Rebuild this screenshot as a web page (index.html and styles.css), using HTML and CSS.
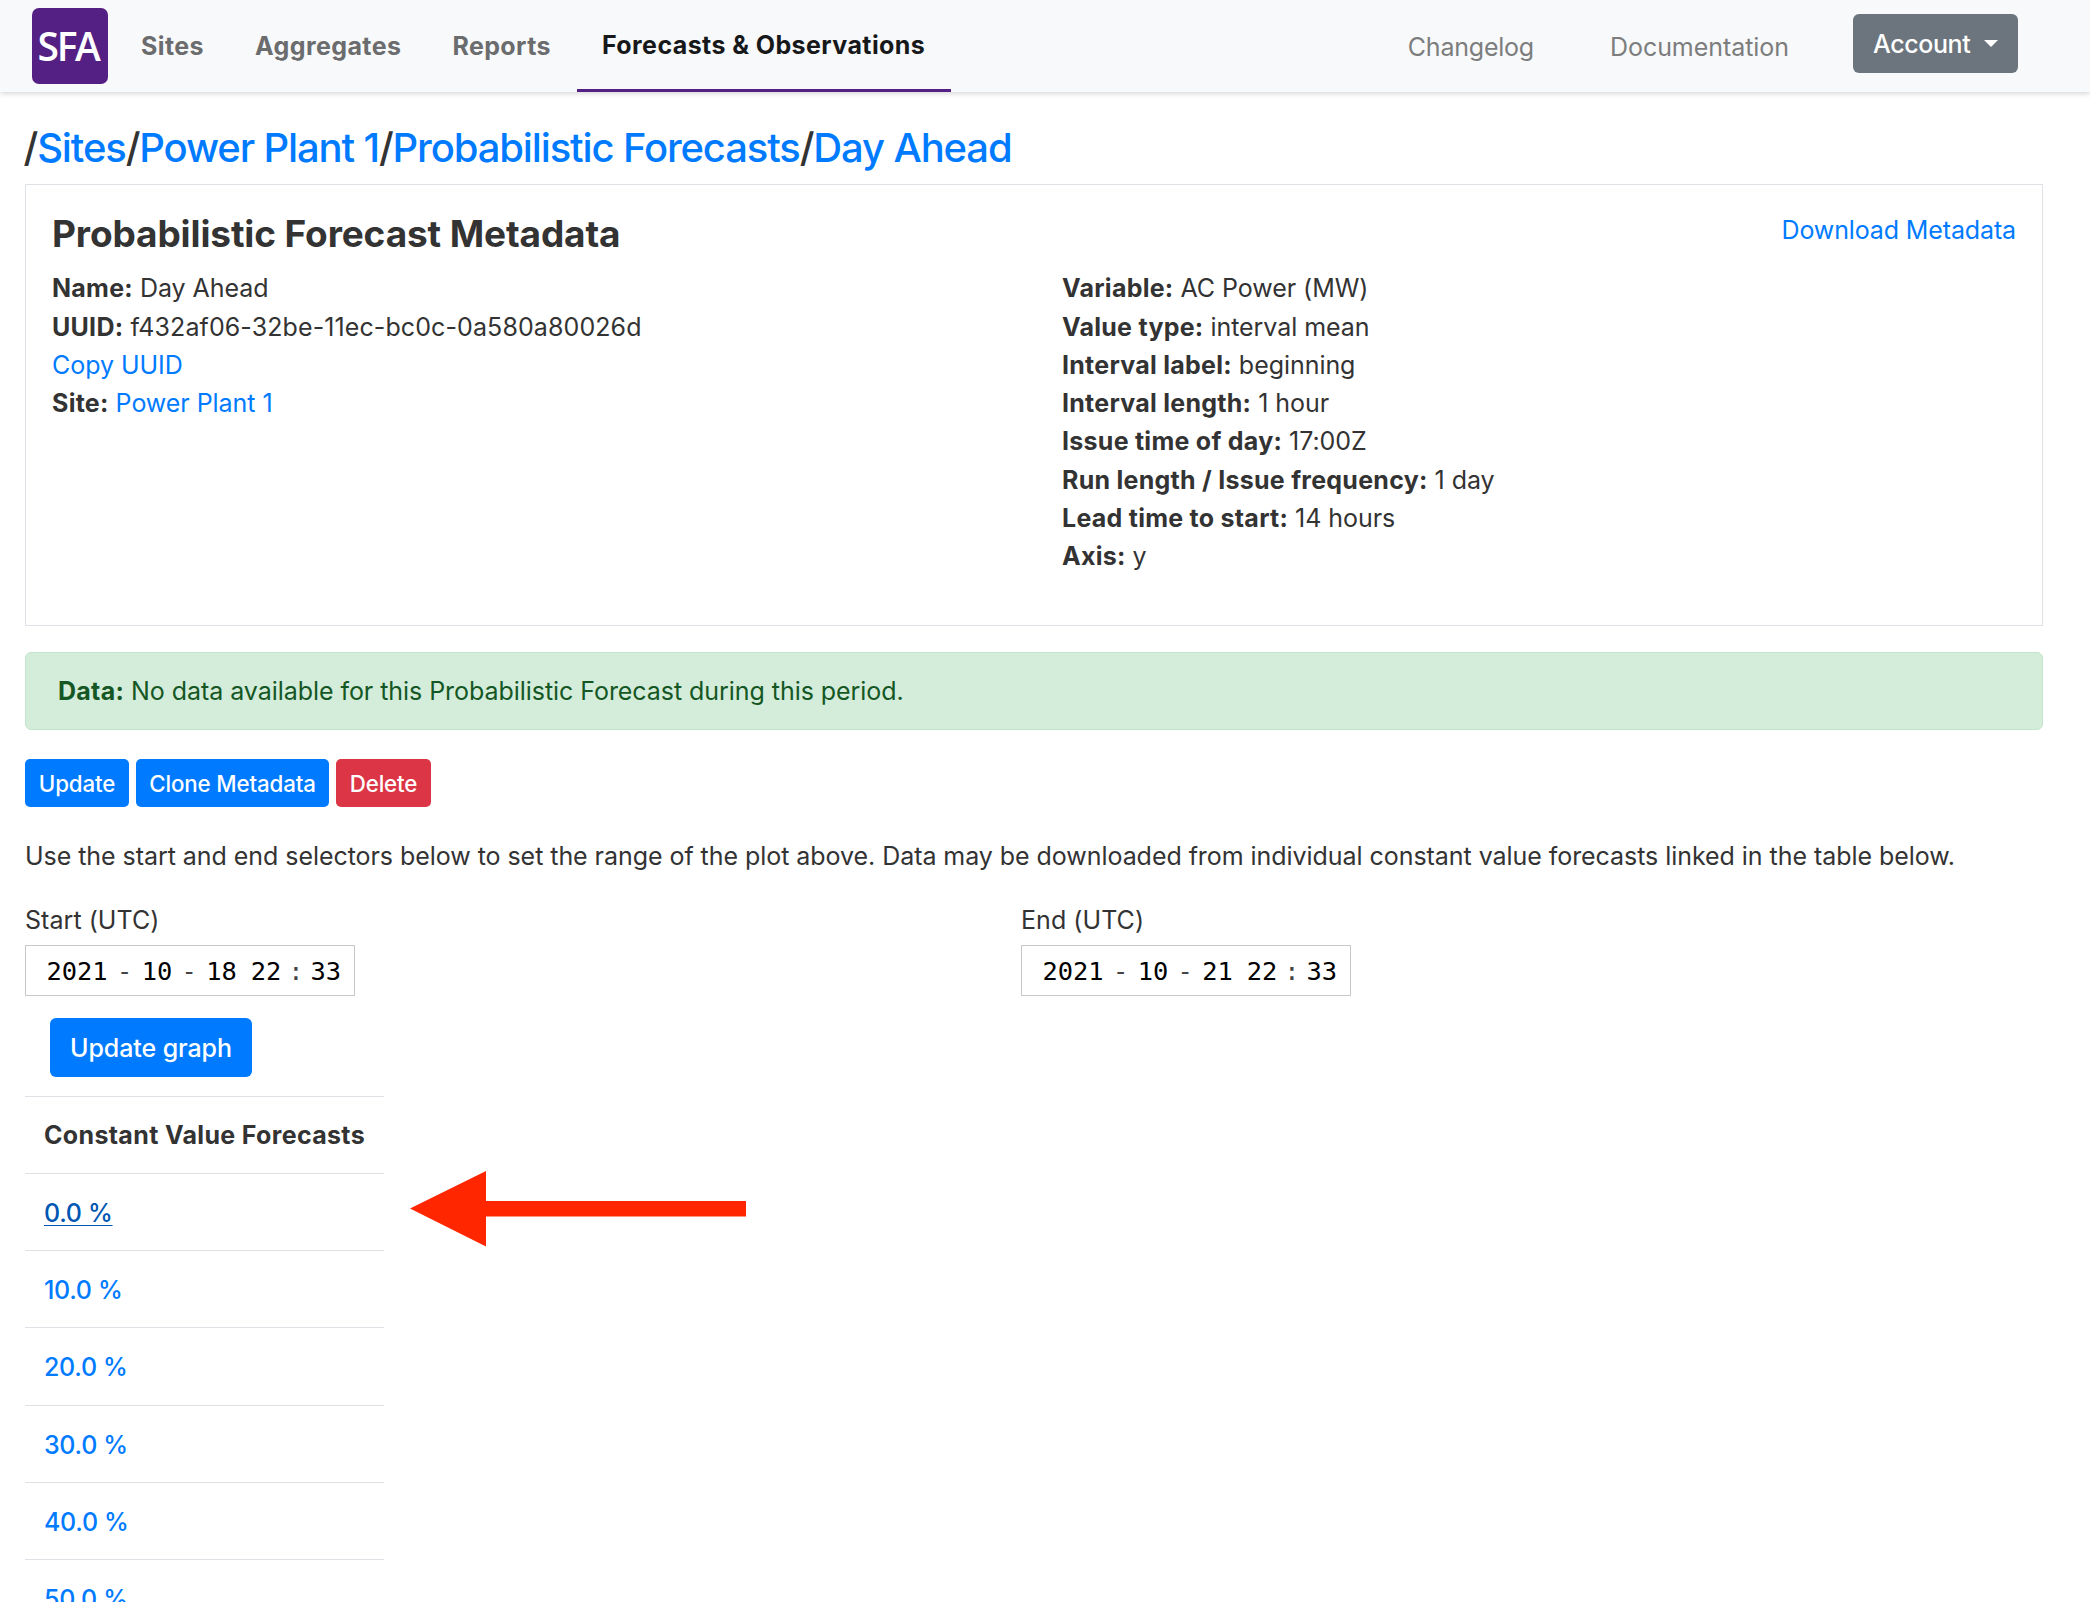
FILE: index.html
```html
<!DOCTYPE html>
<html lang="en">
<head>
<meta charset="utf-8">
<title>Day Ahead - Probabilistic Forecast</title>
<link rel="stylesheet" href="styles.css">
</head>
<body>
<nav class="navbar">
  <a class="brand" href="#">SFA</a>
  <div class="nav-main">
    <a class="nav-link sites" href="#">Sites</a>
    <a class="nav-link aggregates" href="#">Aggregates</a>
    <a class="nav-link reports" href="#">Reports</a>
    <a class="nav-link active" href="#">Forecasts &amp; Observations</a>
  </div>
  <div class="nav-side">
    <a class="side-link changelog" href="#">Changelog</a>
    <a class="side-link docs" href="#">Documentation</a>
    <a class="account" href="#">Account<span class="caret"></span></a>
  </div>
</nav>
<main class="content">
  <h1 class="breadcrumb">/<a href="#">Sites</a>/<a href="#">Power Plant 1</a>/<a href="#">Probabilistic Forecasts</a>/<a href="#">Day Ahead</a></h1>
  <section class="metadata">
    <div class="metadata-head">
      <h2 class="metadata-title">Probabilistic Forecast Metadata</h2>
      <a class="download" href="#">Download Metadata</a>
    </div>
    <div class="metadata-cols">
      <div class="col">
        <div class="item"><b>Name:</b> Day Ahead</div>
        <div class="item uuid"><b>UUID:</b> f432af06-32be-11ec-bc0c-0a580a80026d</div>
        <div class="item"><a href="#">Copy UUID</a></div>
        <div class="item"><b>Site:</b> <a href="#">Power Plant 1</a></div>
      </div>
      <div class="col">
        <div class="item"><b>Variable:</b> AC Power (MW)</div>
        <div class="item"><b>Value type:</b> interval mean</div>
        <div class="item"><b>Interval label:</b> beginning</div>
        <div class="item"><b>Interval length:</b> 1 hour</div>
        <div class="item"><b>Issue time of day:</b> 17:00Z</div>
        <div class="item"><b>Run length / Issue frequency:</b> 1 day</div>
        <div class="item"><b>Lead time to start:</b> 14 hours</div>
        <div class="item"><b>Axis:</b> y</div>
      </div>
    </div>
  </section>
  <div class="alert"><b>Data:</b> No data available for this Probabilistic Forecast during this period.</div>
  <div class="actions">
    <a class="btn-sm update" href="#">Update</a>
    <a class="btn-sm clone" href="#">Clone Metadata</a>
    <a class="btn-sm delete" href="#">Delete</a>
  </div>
  <p class="help">Use the start and end selectors below to set the range of the plot above. Data may be downloaded from individual constant value forecasts linked in the table below.</p>
  <div class="range">
    <div class="field">
      <div class="label">Start (UTC)</div>
      <div class="datetime"><span>2021</span><i class="dash">-</i><span>10</span><i class="dash">-</i><span>18</span><span class="hour">22</span><i class="colon">:</i><span>33</span></div>
    </div>
    <div class="field">
      <div class="label">End (UTC)</div>
      <div class="datetime"><span>2021</span><i class="dash">-</i><span>10</span><i class="dash">-</i><span>21</span><span class="hour">22</span><i class="colon">:</i><span>33</span></div>
    </div>
  </div>
  <a class="btn" href="#">Update graph</a>
  <div class="forecasts">
    <div class="row head">Constant Value Forecasts</div>
    <div class="row"><a class="hovered" href="#">0.0 %</a></div>
    <div class="row"><a href="#">10.0 %</a></div>
    <div class="row"><a href="#">20.0 %</a></div>
    <div class="row"><a href="#">30.0 %</a></div>
    <div class="row"><a href="#">40.0 %</a></div>
    <div class="row"><a href="#">50.0 %</a></div>
  </div>
  <svg class="arrow" width="338" height="78" viewBox="0 0 338 78"><path d="M1 38.500 77 1V31H337V46.500H77V76.500Z" fill="#ff2600"/></svg>
</main>
</body>
</html>
```
FILE: styles.css
```css
* { box-sizing: border-box; }

html { height: 100%; overflow: hidden; }

body {
  height: 100%;
  margin: 0;
  overflow: hidden;
  background: #fff;
  color: #333;
  font: 400 25px/38.250px Inter, sans-serif;
  letter-spacing: -.05px;
}

a { color: #007bff; text-decoration: none; }
b { font-weight: 700; letter-spacing: .26px; }

.navbar {
  display: flex;
  align-items: flex-start;
  height: 92px;
  padding-left: 32px;
  padding-right: 72px;
  background: #f8f9fb;
  box-shadow: 0 1px 6px rgba(0, 0, 0, .2);
}

.brand {
  width: 76px;
  height: 76px;
  margin-top: 8px;
  padding-right: 4px;
  border-radius: 7px;
  background: #552084;
  color: #fff;
  font: 600 39px/76px "Open Sans", sans-serif;
  letter-spacing: -2.400px;
  text-align: center;
}

.nav-main { display: flex; margin-left: 7.500px; }

.nav-link {
  height: 92px;
  padding: 27px 25.500px 0;
  color: #6b6c6d;
  font-weight: 700;
  letter-spacing: .41px;
}

.nav-link.active {
  padding-top: 26px;
  border-bottom: 3px solid #552084;
  color: #17181a;
}

.nav-side { display: flex; margin-left: auto; }
.side-link { padding-top: 28px; color: #7c7d7d; }
.changelog { margin-right: 76px; letter-spacing: -.22px; }
.docs { margin-right: 64px; }

.account {
  display: flex;
  align-items: center;
  justify-content: space-between;
  width: 165px;
  height: 59px;
  margin-top: 14px;
  padding: 1px 20px 0;
  border-radius: 6px;
  background: #6c757d;
  color: #fff;
  font-weight: 450;
  letter-spacing: -.4px;
}

.caret {
  margin-top: -2px;
  border: 7px solid transparent;
  border-top-color: #fff;
  border-bottom: 0;
}

.content { position: relative; padding: 29px 47px 0 25px; }

.breadcrumb {
  margin: 0;
  font-size: 40px;
  font-weight: 500;
  line-height: 54px;
  letter-spacing: -1.140px;
  text-indent: -1.500px;
}

.metadata {
  height: 442px;
  margin-top: 9px;
  padding: 24px 26px;
  border: 1px solid #dee2e6;
}

.metadata-head { display: flex; justify-content: space-between; height: 54px; }
.metadata-title { margin: 0; font-size: 37px; font-weight: 700; line-height: 50px; letter-spacing: -.12px; }
.download { margin-top: 2px; letter-spacing: -.13px; }
.metadata-cols { display: grid; grid-template-columns: 1010px 1fr; padding-top: 6.250px; }
.uuid { letter-spacing: .1px; }

.alert {
  height: 78px;
  margin-top: 26px;
  padding: 19px 32px;
  border: 1px solid #c3e6cb;
  border-radius: 6px;
  background: #d4edda;
  color: #155724;
}

.actions { display: flex; gap: 7px; margin-top: 29px; }

.btn-sm {
  height: 48px;
  border-radius: 5px;
  background: #007bff;
  color: #fff;
  font-size: 22.300px;
  font-weight: 450;
  line-height: 50px;
  letter-spacing: -.14px;
  text-align: center;
}

.update { width: 104px; }
.clone { width: 193px; }
.delete { width: 95px; background: #dc3545; }

.help { margin: 30px 0 0; white-space: nowrap; }

.range { display: grid; grid-template-columns: 996px 1fr; margin-top: 26px; }
.label { letter-spacing: .05px; }

.datetime {
  display: flex;
  width: 330px;
  height: 51px;
  margin-top: 5px;
  padding-left: 20.500px;
  border: 1px solid #c8c8c8;
  color: #000;
  font: 400 25.400px/50px "DejaVu Sans Mono", monospace;
  letter-spacing: 0;
}

.datetime i { color: #444; font-style: normal; text-align: center; }
.dash { width: 34px; }
.colon { width: 29px; }
.hour { margin-left: 14px; }

.btn {
  display: block;
  width: 202px;
  height: 59px;
  margin: 22px 0 0 25px;
  border-radius: 6px;
  background: #007bff;
  color: #fff;
  font-weight: 450;
  line-height: 60px;
  letter-spacing: -.1px;
  text-align: center;
}

.forecasts { width: 359px; margin-top: 19px; }

.row {
  height: 77.300px;
  padding: 20px 19px 0;
  border-top: 1px solid #dee2e6;
  font-weight: 450;
  letter-spacing: -.3px;
  white-space: nowrap;
}

.head { padding-top: 19px; font-weight: 700; letter-spacing: .34px; }
.hovered { color: #0056b3; text-decoration: underline; text-underline-offset: 3px; text-decoration-thickness: 1px; }

/* callout drawn over the page, pointing at the first forecast */
.arrow { position: absolute; left: 409px; top: 1078px; }
```
